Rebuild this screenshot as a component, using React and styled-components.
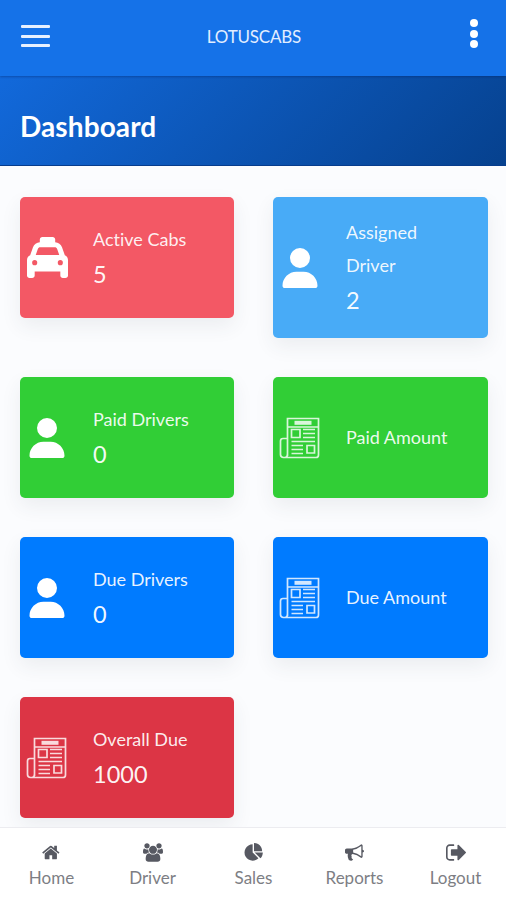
import React from "react"
import styled, { createGlobalStyle } from "styled-components"
import { FaTaxi, FaUser } from "react-icons/fa6"

const GlobalStyle = createGlobalStyle`
  * {
    box-sizing: border-box;
  }
  body {
    margin: 0;
    overflow: hidden;
    font-family: Lato, sans-serif;
    font-variant-ligatures: none;
    background-color: #fbfcfe;
  }
`

const Page = styled.div`
  height: 900px;
  display: flex;
  flex-direction: column;
  overflow: hidden;
`

const Header = styled.header`
  flex: none;
  height: 76px;
  padding: 0 27px 4px 21px;
  display: grid;
  grid-template-columns: 29px 1fr 29px;
  align-items: center;
  background-color: #1572e8;
  color: #fff;
  z-index: 1;
  box-shadow: 0 1px 2px rgba(0, 30, 90, 0.35);
`

const MenuButton = styled.button`
  width: 29px;
  padding: 0;
  border: 0;
  background: none;
  display: flex;
  flex-direction: column;
  gap: 6.5px;
`

const MenuLine = styled.span`
  width: 29px;
  height: 3px;
  border-radius: 1px;
  background-color: #e6f0ff;
`

const Brand = styled.span`
  padding-left: 8px;
  text-align: center;
  font-size: 17px;
  letter-spacing: -0.2px;
  color: #e2eeff;
`

const MoreButton = styled.button`
  width: 10px;
  padding: 0;
  margin-bottom: 5px;
  border: 0;
  background: none;
  display: flex;
  flex-direction: column;
  align-items: center;
  justify-self: end;
  gap: 2.5px;
`

const Dot = styled.span`
  width: 8px;
  height: 8px;
  border-radius: 50%;
  background-color: #fff;
`

const Hero = styled.section`
  flex: none;
  height: 90px;
  padding: 10px 20px 0;
  display: flex;
  align-items: center;
  background: linear-gradient(-45deg, #06418e, #1269db);
  border-bottom: 1px solid #073c8c;
`

const Title = styled.h2`
  margin: 0;
  font-size: 28px;
  line-height: 34px;
  letter-spacing: 0.1px;
  font-weight: 700;
  color: #fff;
`

const Content = styled.main`
  flex: 1;
  min-height: 0;
  padding: 31px 18px 0 20px;
`

const Cards = styled.div`
  display: grid;
  grid-template-columns: 214px 215px;
  column-gap: 39px;
  row-gap: 39px;
  align-items: start;
`

const Card = styled.div`
  min-height: 121px;
  padding: 19px 6px;
  border-radius: 5px;
  display: flex;
  align-items: center;
  background-color: ${(props) => props.$color};
  box-shadow: 0 8px 20px rgba(50, 60, 80, 0.08);
  color: #fff;
`

const CardIcon = styled.div`
  flex: none;
  width: 42px;
  display: flex;
  justify-content: center;
`

const CardBody = styled.div`
  width: 110px;
  margin-left: 25px;
`

const CardLabel = styled.p`
  margin: 0;
  font-size: 18px;
  line-height: 33px;
  color: rgba(255, 255, 255, 0.92);
`

const CardValue = styled.h4`
  margin: 0;
  font-size: 23.5px;
  line-height: 37px;
  font-weight: 400;
  color: rgba(255, 255, 255, 0.96);
`

const BottomNav = styled.nav`
  flex: none;
  height: 73px;
  padding-left: 1px;
  display: grid;
  grid-template-columns: repeat(5, 1fr);
  background-color: #fff;
  border-top: 1px solid #ececf0;
  z-index: 1;
`

const NavItem = styled.a`
  padding-top: 15px;
  display: flex;
  flex-direction: column;
  align-items: center;
  color: #575962;
`

const NavLabel = styled.span`
  margin-top: 5px;
  font-size: 17px;
  line-height: 21px;
  color: #7d7e84;
`

const NewspaperIcon = () => (
  <svg width="42" height="42" viewBox="0 0 42 42" fill="none" stroke="#fff" strokeOpacity="0.82" strokeWidth="1.7">
    <path d="M8.5 39V1.5h31V38q0 2.5-2.5 2.5H4.5q-3 0-3-3V24q0-2.5 2.5-2.5h4.5M8.5 37q0 3.5-2.5 3.5M8.5 10h31" />
    <path d="M15.5 5.8h17" strokeWidth="4" />
    <path d="M12.5 12.5h8.5v8h-8.5zM28 28.5h7.5v7.5H28z" />
    <path d="M24 12.5h12M24 16.5h12M24 20.5h12M12.5 24.5H36M12.5 28.5H24M12.5 32.5H24M12.5 36.5H24" strokeWidth="1.5" />
  </svg>
)

const cards = [
  { label: "Active Cabs", value: 5, color: "#f35865", icon: <FaTaxi size={41} /> },
  { label: "Assigned Driver", value: 2, color: "#48abf7", icon: <FaUser size={40} /> },
  { label: "Paid Drivers", value: 0, color: "#31ce36", icon: <FaUser size={40} /> },
  { label: "Paid Amount", color: "#31ce36", icon: <NewspaperIcon /> },
  { label: "Due Drivers", value: 0, color: "#007bff", icon: <FaUser size={40} /> },
  { label: "Due Amount", color: "#007bff", icon: <NewspaperIcon /> },
  { label: "Overall Due", value: 1000, color: "#dc3545", icon: <NewspaperIcon /> },
]

const navItems = [
  {
    label: "Home",
    viewBox: "0 0 1792 1792",
    width: 19,
    path: "M1408 992v480q0 26-19 45t-45 19h-384v-384h-256v384h-384q-26 0-45-19t-19-45v-480q0-1 .5-3t.5-3l575-474 575 474q1 2 1 6zm223-69l-62 74q-8 9-21 11h-3q-13 0-21-7l-692-577-692 577q-12 8-24 7-13-2-21-11l-62-74q-8-10-7-23.5t11-21.5l719-599q32-26 76-26t76 26l244 204v-195q0-14 9-23t23-9h192q14 0 23 9t9 23v408l219 182q10 8 11 21.5t-7 23.5z",
  },
  {
    label: "Driver",
    viewBox: "0 0 1920 1792",
    width: 20,
    path: "M593 896q-162 5-265 128h-134q-82 0-138-40.5t-56-118.5q0-353 124-353 6 0 43.5 21t97.5 42.5 119 21.5q67 0 133-23-5 37-5 66 0 139 81 256zm1071 637q0 120-73 189.5t-194 69.5h-874q-121 0-194-69.5t-73-189.5q0-53 3.5-103.5t14-109 26.5-108.5 43-97.5 62-81 85.5-53.5 111.5-20q10 0 43 21.5t73 48 107 48 135 21.5 135-21.5 107-48 73-48 43-21.5q61 0 111.5 20t85.5 53.5 62 81 43 97.5 26.5 108.5 14 109 3.5 103.5zm-1024-1277q0 106-75 181t-181 75-181-75-75-181 75-181 181-75 181 75 75 181zm704 384q0 159-112.5 271.5t-271.5 112.5-271.5-112.5-112.5-271.5 112.5-271.5 271.5-112.5 271.5 112.5 112.5 271.5zm576 225q0 78-56 118.5t-138 40.5h-134q-103-123-265-128 81-117 81-256 0-29-5-66 66 23 133 23 59 0 119-21.5t97.5-42.5 43.5-21q124 0 124 353zm-128-609q0 106-75 181t-181 75-181-75-75-181 75-181 181-75 181 75 75 181z",
  },
  {
    label: "Sales",
    viewBox: "0 0 1792 1792",
    width: 20,
    path: "M768 890l546 546q-106 108-247.5 168t-298.5 60q-209 0-385.5-103t-279.5-279.5-103-385.5 103-385.5 279.5-279.5 385.5-103v762zm187 6h773q0 157-60 298.5t-168 247.5zm709-128h-768v-768q209 0 385.5 103t279.5 279.5 103 385.5z",
  },
  {
    label: "Reports",
    viewBox: "0 0 1792 1792",
    width: 19,
    path: "M1664 640q53 0 90.5 37.5t37.5 90.5-37.5 90.5-90.5 37.5v384q0 52-38 90t-90 38q-417-347-812-380-58 19-91 66t-31 100.5 40 92.5q-20 33-23 65.5t6 58 33.5 55 48 50 61.5 50.5q-29 58-111.5 83t-168.5 11.5-132-55.5q-7-23-29.5-87.5t-32-94.5-23-89-15-101 3.5-98.5 22-110.5h-122q-66 0-113-47t-47-113v-192q0-66 47-113t113-47h480q435 0 896-384 52 0 90 38t38 90v384zm-128 604v-954q-394 302-768 343v270q377 42 768 341z",
  },
  {
    label: "Logout",
    viewBox: "64 160 1568 1472",
    width: 20,
    path: "M704 1440q0 4 1 20t.5 26.5-3 23.5-10 19.5-20.5 6.5h-320q-119 0-203.5-84.5t-84.5-203.5v-704q0-119 84.5-203.5t203.5-84.5h320q13 0 22.5 9.5t9.5 22.5q0 4 1 20t.5 26.5-3 23.5-10 19.5-20.5 6.5h-320q-66 0-113 47t-47 113v704q0 66 47 113t113 47h312l11.5 1 11.5 3 8 5.5 7 9 2 13.5zm928-544q0 26-19 45l-544 544q-19 19-45 19t-45-19-19-45v-288h-448q-26 0-45-19t-19-45v-384q0-26 19-45t45-19h448v-288q0-26 19-45t45-19 45 19l544 544q19 19 19 45z",
  },
]

const App = () => {
  return (
    <>
      <GlobalStyle />
      <Page>
        <Header>
          <MenuButton aria-label="Menu">
            <MenuLine />
            <MenuLine />
            <MenuLine />
          </MenuButton>
          <Brand>LOTUSCABS</Brand>
          <MoreButton aria-label="More">
            <Dot />
            <Dot />
            <Dot />
          </MoreButton>
        </Header>
        <Hero>
          <Title>Dashboard</Title>
        </Hero>
        <Content>
          <Cards>
            {cards.map((card) => (
              <Card key={card.label} $color={card.color}>
                <CardIcon>{card.icon}</CardIcon>
                <CardBody>
                  <CardLabel>{card.label}</CardLabel>
                  {card.value !== undefined && <CardValue>{card.value}</CardValue>}
                </CardBody>
              </Card>
            ))}
          </Cards>
        </Content>
        <BottomNav>
          {navItems.map((item) => (
            <NavItem key={item.label}>
              <svg width={item.width} height="19" viewBox={item.viewBox} fill="currentColor">
                <path d={item.path} />
              </svg>
              <NavLabel>{item.label}</NavLabel>
            </NavItem>
          ))}
        </BottomNav>
      </Page>
    </>
  )
}

export default App
